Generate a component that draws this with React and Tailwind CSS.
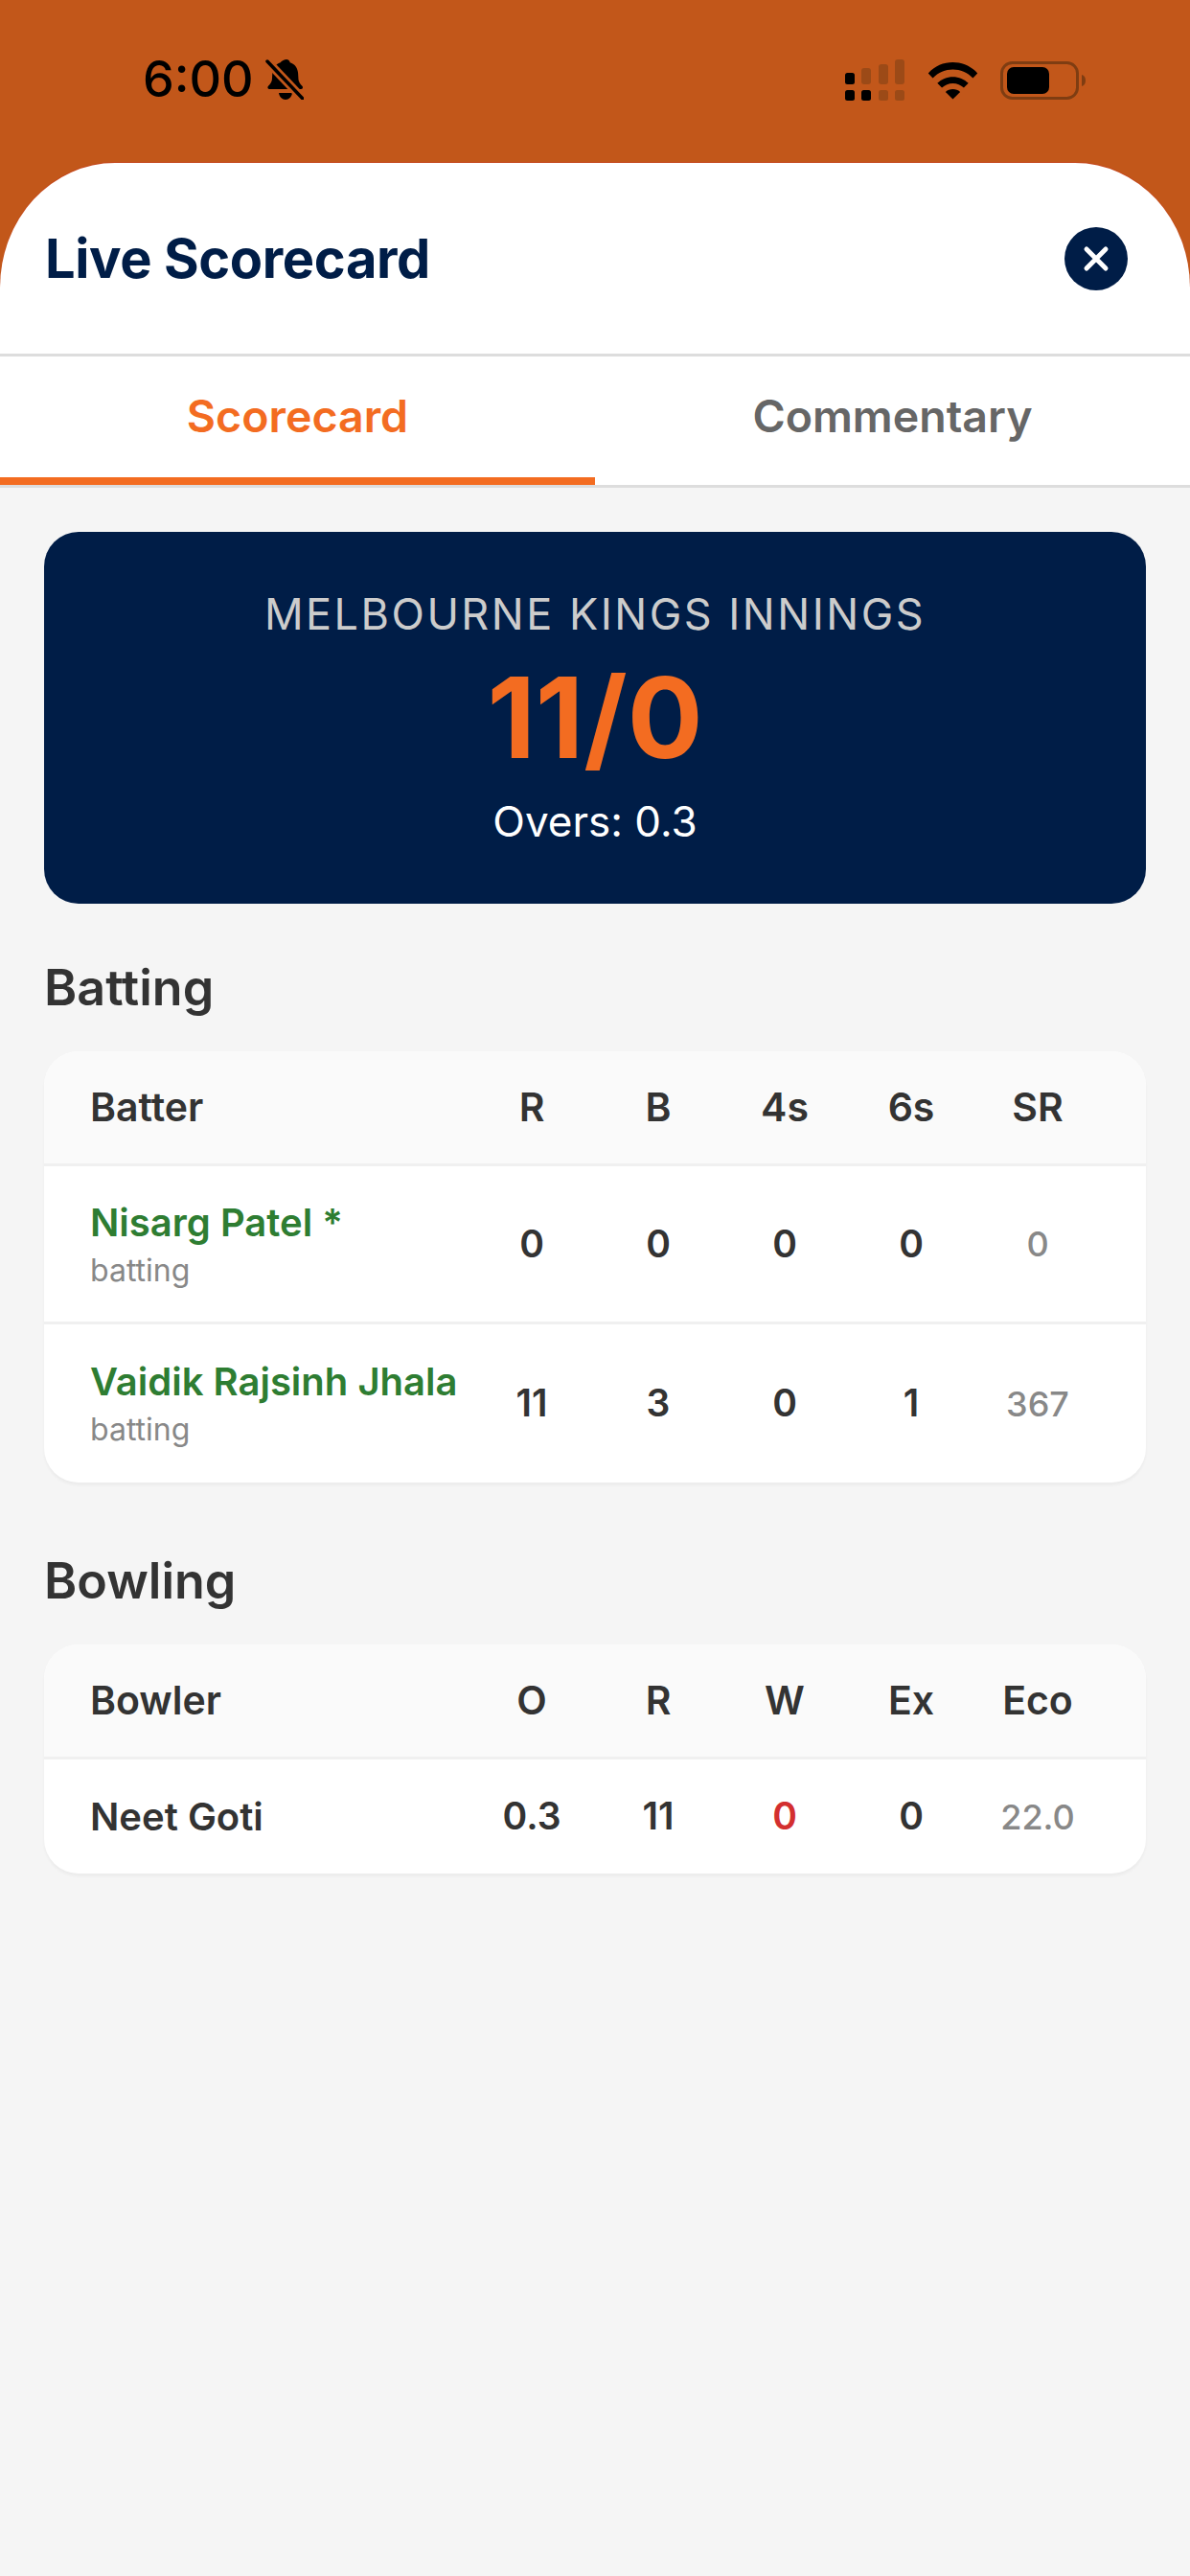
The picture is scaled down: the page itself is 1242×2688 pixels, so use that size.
const fontClass = "font-['Inter','Liberation_Sans',sans-serif]";

const batters = [
  { name: "Nisarg Patel *", stats: ["0", "0", "0", "0"], sr: "0" },
  { name: "Vaidik Rajsinh Jhala", stats: ["11", "3", "0", "1"], sr: "367" },
];

function BellOff() {
  return (
    <svg width="40" height="42" viewBox="0 0 40 42" fill="none">
      <path d="M22 0c2 0 3.400 1.400 3.700 3.200 5.300 1.500 8 5.800 8.400 11.300l.4 6.500c.2 2.600 1.800 4.600 3.900 6.700 1.200 1.300.6 3.300-1.400 3.300H4.400c-2 0-2.600-2-1.400-3.300 2.100-2.100 3.700-4.100 3.900-6.700l.4-6.500c.4-5.500 3.100-9.800 8.400-11.300C16.900 1.400 20 0 22 0z" fill="#000" />
      <path d="M14 35h14c-.5 4-3.500 7-7 7s-6.500-3-7-7z" fill="#000" />
      <path d="M2 2l37 39" stroke="#c2571a" strokeWidth="9" />
      <path d="M2 2l37 39" stroke="#000" strokeWidth="3.500" strokeLinecap="round" />
    </svg>
  );
}

function StatusIcons() {
  const dim = "#9c4a17";
  return (
    <div className="flex items-center">
      <svg width="62" height="43" viewBox="0 0 62 43" className="mr-[23px]">
        <rect x="0" y="14" width="10" height="12" rx="2.500" fill="#000" />
        <rect x="17" y="9" width="10" height="17" rx="3" fill={dim} />
        <rect x="35" y="5" width="10" height="21" rx="3" fill={dim} />
        <rect x="52" y="0" width="10" height="26" rx="3" fill={dim} />
        <rect x="0" y="32" width="10" height="11" rx="2.500" fill="#000" />
        <rect x="17" y="32" width="10" height="11" rx="2.500" fill="#000" />
        <rect x="35" y="32" width="10" height="11" rx="2.500" fill={dim} />
        <rect x="52" y="32" width="10" height="11" rx="2.500" fill={dim} />
      </svg>
      <svg width="55" height="40" viewBox="0 0 56 42" className="mr-[22px]">
        <path d="M1 13C8 5 18 1 28 1s20 4 27 12l-5 5.500C44 12 36 9 28 9S12 12 6 18.500z" fill="#000" />
        <path d="M11 24c4.500-4.500 10.500-7 17-7s12.500 2.500 17 7l-5 5c-3.200-3-7.500-4.800-12-4.800S19.200 26 16 29z" fill="#000" />
        <path d="M20 33.500c2.200-2 5-3 8-3s5.800 1 8 3L28 41.500z" fill="#000" />
      </svg>
      <svg width="90" height="40" viewBox="0 0 90 40">
        <rect x="1.500" y="1.500" width="79" height="37" rx="11" fill="none" stroke="#7f3d12" strokeWidth="3" />
        <rect x="7" y="6" width="44" height="28" rx="7" fill="#000" />
        <path d="M85 14c2.500.5 4 3 4 6s-1.500 5.500-4 6z" fill="#7f3d12" />
      </svg>
    </div>
  );
}

function CloseButton() {
  return (
    <button className="flex h-[66px] w-[66px] items-center justify-center rounded-full bg-[#001d47]">
      <svg width="30" height="30" viewBox="0 0 30 30" fill="none">
        <path d="M5 5l20 20M25 5L5 25" stroke="#fff" strokeWidth="5" strokeLinecap="round" />
      </svg>
    </button>
  );
}

function Cell({ children, className = "" }) {
  return <div className={`w-[132px] shrink-0 text-center ${className}`}>{children}</div>;
}

function TableHeader({ first, cols }) {
  return (
    <div className="flex h-[120px] items-center border-b-[3px] border-[#f0f0f0] bg-[#fafafa] pl-[48px] pr-[47px] text-[41px] font-semibold text-[#333333]">
      <div className="flex-1">{first}</div>
      {cols.map((col) => (
        <Cell key={col}>{col}</Cell>
      ))}
    </div>
  );
}

function BatterRow({ batter, last }) {
  return (
    <div className={`flex h-[165px] items-center pl-[48px] pr-[47px] ${last ? "" : "border-b-[3px] border-[#f0f0f0]"}`}>
      <div className="min-w-0 flex-1">
        <p className="whitespace-nowrap text-[40px] font-semibold leading-[48px] text-[#2e7d32]">{batter.name}</p>
        <p className="mt-[7px] text-[32px] leading-[38px] text-[#888888]">batting</p>
      </div>
      {batter.stats.map((value, index) => (
        <Cell key={index} className="text-[39px] font-semibold text-[#333333]">
          {value}
        </Cell>
      ))}
      <Cell className="text-[36px] font-medium text-[#888888]">{batter.sr}</Cell>
    </div>
  );
}

export default function App() {
  return (
    <div className={`flex min-h-[2688px] flex-col bg-[#c2571a] ${fontClass}`}>
      <div className="flex h-[170px] items-start justify-between pl-[149px] pr-[108px] pt-[62px]">
        <div className="flex items-center gap-[12px]">
          <span className="text-[52px] font-medium leading-[42px] text-black">6:00</span>
          <BellOff />
        </div>
        <StatusIcons />
      </div>

      <div className="flex flex-1 flex-col overflow-hidden rounded-tl-[120px_130px] rounded-tr-[120px_130px] bg-white shadow-[0_-1px_0_#c4451a]">
        <div className="flex h-[202px] items-center justify-between border-b-[3px] border-[#dddddd] pl-[47px] pr-[65px]">
          <h1 className="text-[56px] font-bold tracking-[-0.4px] text-[#001d47]">Live Scorecard</h1>
          <CloseButton />
        </div>

        <div className="flex h-[137px] border-b-[3px] border-[#dddddd] bg-white text-[46.500px] font-semibold">
          <div className="flex flex-1 items-center justify-center border-b-[8px] border-[#f36c21] text-[#f36c21]">Scorecard</div>
          <div className="flex flex-1 items-center justify-center pb-[8px] text-[#666666]">Commentary</div>
        </div>

        <div className="flex-1 bg-[#f5f5f5] px-[46px] pt-[46px]">
          <div className="flex h-[388px] flex-col items-center rounded-[36px] bg-[#001d47] pt-[61px]">
            <p className="text-[45px] leading-[50px] tracking-[2.500px] text-[#cccccc]">MELBOURNE KINGS INNINGS</p>
            <p className="mt-[18px] text-[117px] font-bold leading-[130px] text-[#f36c21]">11/0</p>
            <p className="mt-[18px] text-[44px] leading-[50px] text-white">Overs: 0.3</p>
          </div>

          <h2 className="mt-[58px] text-[52px] font-semibold leading-[60px] text-[#333333]">Batting</h2>
          <div className="mt-[36px] overflow-hidden rounded-[36px] bg-white shadow-[0_3px_3px_rgba(0,0,0,0.04)]">
            <TableHeader first="Batter" cols={["R", "B", "4s", "6s", "SR"]} />
            {batters.map((batter, index) => (
              <BatterRow key={batter.name} batter={batter} last={index === batters.length - 1} />
            ))}
          </div>

          <h2 className="mt-[73px] text-[52px] font-semibold leading-[60px] text-[#333333]">Bowling</h2>
          <div className="mt-[36px] overflow-hidden rounded-[36px] bg-white shadow-[0_3px_3px_rgba(0,0,0,0.04)]">
            <TableHeader first="Bowler" cols={["O", "R", "W", "Ex", "Eco"]} />
            <div className="flex h-[119px] items-center pl-[48px] pr-[47px] text-[39px] font-semibold text-[#333333]">
              <div className="flex-1 text-[40px]">Neet Goti</div>
              <Cell>0.3</Cell>
              <Cell>11</Cell>
              <Cell className="text-[#d32f2f]">0</Cell>
              <Cell>0</Cell>
              <Cell className="text-[36px] font-medium text-[#888888]">22.0</Cell>
            </div>
          </div>
        </div>
      </div>
    </div>
  );
}
